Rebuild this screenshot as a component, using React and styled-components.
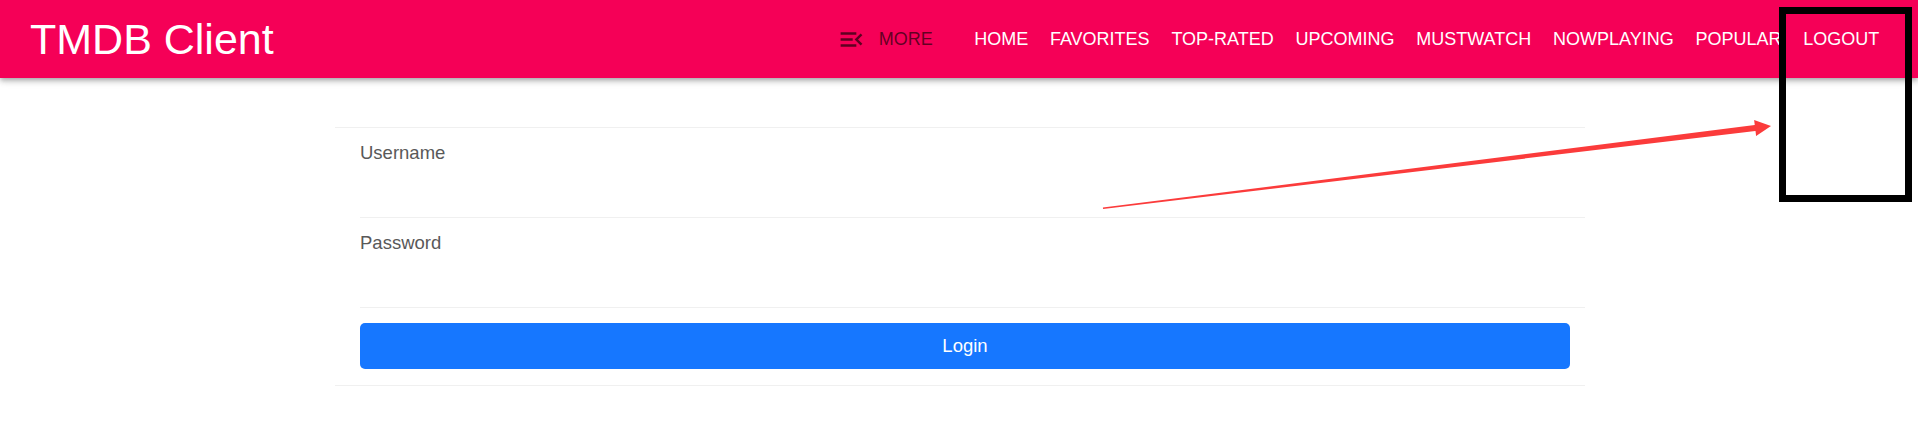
import React from "react";
import styled, { createGlobalStyle } from "styled-components";

const GlobalStyle = createGlobalStyle`
  html, body { margin: 0; padding: 0; background: #fff; }
  body { font-family: "Liberation Sans", Arial, sans-serif; }
  * { box-sizing: border-box; }
`;

const Page = styled.div`
  position: relative;
  min-height: 436px;
  overflow: hidden;
`;

const AppBar = styled.header`
  position: relative;
  z-index: 1;
  height: 78px;
  background: #f50057;
  display: flex;
  align-items: center;
  justify-content: space-between;
  padding: 0 27.75px 0 30px;
  box-shadow: 0px 2px 4px -1px rgba(0, 0, 0, 0.2),
    0px 4px 5px 0px rgba(0, 0, 0, 0.14), 0px 1px 10px 0px rgba(0, 0, 0, 0.12);
`;

const Brand = styled.h1`
  margin: 0;
  font-size: 43px;
  font-weight: 400;
  color: #fff;
  line-height: 1;
  white-space: nowrap;
`;

const Nav = styled.nav`
  display: flex;
  align-items: center;
`;

const MoreButton = styled.button`
  display: flex;
  align-items: center;
  gap: 12.6px;
  margin-right: 30.5px;
  padding: 0;
  border: 0;
  background: none;
  color: rgba(0, 0, 0, 0.62);
  font-family: inherit;
  font-size: 18px;
  text-transform: uppercase;
  cursor: pointer;
  svg { display: block; }
`;

const NavLink = styled.a`
  padding: 0 10.9px;
  color: #fff;
  font-size: 18px;
  text-decoration: none;
  text-transform: uppercase;
  white-space: nowrap;
  line-height: 1;
`;

const Card = styled.div`
  width: 1250px;
  margin: 49px 0 0 calc(50% - 624px);
  padding-left: 25px;
  border-top: 1px solid #f0f0f0;
  border-bottom: 1px solid #f0f0f0;
`;

const Field = styled.div`
  padding-top: 11px;
  border-bottom: 1px solid #f0f0f0;
`;

const Label = styled.label`
  display: block;
  font-size: 18.5px;
  line-height: 28px;
  color: #595959;
`;

const Input = styled.input`
  display: block;
  width: 100%;
  height: 50px;
  border: 0;
  outline: none;
  background: transparent;
  font-family: inherit;
  font-size: 18px;
`;

const ButtonRow = styled.div`
  padding: 15px 15px 16px 0;
`;

const PrimaryButton = styled.button`
  display: block;
  width: 100%;
  height: 46px;
  border: 0;
  border-radius: 5px;
  background: #1677ff;
  color: #fff;
  font-family: inherit;
  font-size: 18.5px;
  cursor: pointer;
`;

const AnnotationLayer = styled.svg`
  position: absolute;
  left: 0;
  top: 0;
  z-index: 2;
  pointer-events: none;
`;

const HighlightBox = styled.div`
  position: absolute;
  z-index: 3;
  left: 1779px;
  top: 7px;
  width: 133px;
  height: 195px;
  border: 7px solid #000;
  pointer-events: none;
`;

function MenuOpenIcon() {
  return (
    <svg width="29" height="29" viewBox="0 0 24 24" fill="currentColor">
      <path d="M3 18h13v-2H3v2zm0-5h10v-2H3v2zm0-7v2h13V6H3zm18 9.59L17.42 12 21 8.41 19.59 7l-5 5 5 5L21 15.59z" />
    </svg>
  );
}

const links = [
  "Home",
  "Favorites",
  "Top-rated",
  "Upcoming",
  "Mustwatch",
  "Nowplaying",
  "Popular",
  "Logout",
];

export default function App() {
  return (
    <Page>
      <GlobalStyle />
      <AppBar>
        <Brand>TMDB Client</Brand>
        <Nav>
          <MoreButton type="button">
            <MenuOpenIcon />
            <span>More</span>
          </MoreButton>
          {links.map((l) => (
            <NavLink key={l} href="#">
              {l}
            </NavLink>
          ))}
        </Nav>
      </AppBar>

      <Card>
        <Field>
          <Label htmlFor="username">Username</Label>
          <Input id="username" type="text" />
        </Field>
        <Field>
          <Label htmlFor="password">Password</Label>
          <Input id="password" type="password" />
        </Field>
        <ButtonRow>
          <PrimaryButton type="button">Login</PrimaryButton>
        </ButtonRow>
      </Card>

      <AnnotationLayer width="1918" height="436" viewBox="0 0 1918 436">
        <polygon
          fill="#fb3b3b"
          points="1103.09,209.0 1102.91,207.6 1756.73,124.72 1757.47,130.68"
        />
        <polygon
          fill="#fb3b3b"
          points="1771,126 1756.1,135.9 1754.14,120.02"
        />
      </AnnotationLayer>
      <HighlightBox />
    </Page>
  );
}
